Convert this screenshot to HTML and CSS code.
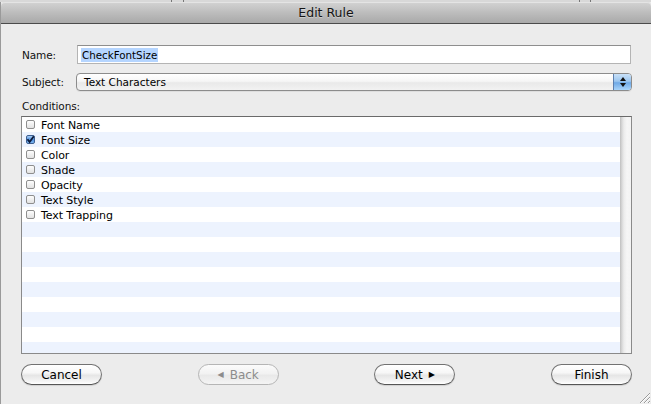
FILE: index.html
```html
<!DOCTYPE html>
<html>
<head>
<meta charset="utf-8">
<link rel="stylesheet" href="styles.css">
</head>
<body>
<div class="behind"><span class="behind-text">Resources_TestFolder</span></div>
<div class="sheet">
  <div class="titlebar">Edit Rule</div>
  <div class="content">
    <div class="field">
      <span class="lbl">Name:</span>
      <div class="input"><span class="sel">CheckFontSize</span></div>
    </div>
    <div class="field subject">
      <span class="lbl">Subject:</span>
      <div class="popup">
        <span class="popup-text">Text Characters</span>
        <span class="popup-arrows">
          <svg width="8" height="12" viewBox="0 0 8 12"><path d="M4 1 L7 5 L1 5 Z" fill="#111"/><path d="M1 7 L7 7 L4 11 Z" fill="#111"/></svg>
        </span>
      </div>
    </div>
    <div class="lbl cond">Conditions:</div>
    <div class="list">
      <div class="rows">
        <div class="row"><span class="cb"></span><span class="rt">Font Name</span></div>
        <div class="row"><span class="cb checked"><svg width="9" height="9" viewBox="0 0 9 9"><path d="M1.5 4.2 L3.6 7 L7.8 1.2" fill="none" stroke="#0b1a3a" stroke-width="1.8"/></svg></span><span class="rt">Font Size</span></div>
        <div class="row"><span class="cb"></span><span class="rt">Color</span></div>
        <div class="row"><span class="cb"></span><span class="rt">Shade</span></div>
        <div class="row"><span class="cb"></span><span class="rt">Opacity</span></div>
        <div class="row"><span class="cb"></span><span class="rt">Text Style</span></div>
        <div class="row"><span class="cb"></span><span class="rt">Text Trapping</span></div>
      </div>
      <div class="scroll"></div>
    </div>
    <div class="buttons">
      <div class="btn">Cancel</div>
      <div class="btn disabled"><span class="arr">&#9664;</span>Back</div>
      <div class="btn">Next<span class="arr right">&#9654;</span></div>
      <div class="btn">Finish</div>
    </div>
  </div>
  <div class="grip">
    <svg width="13" height="13" viewBox="0 0 13 13"><path d="M12 2 L2 12 M12 6 L6 12 M12 10 L10 12" stroke="#9a9a9a" stroke-width="1"/><path d="M12 3 L3 12 M12 7 L7 12 M12 11 L11 12" stroke="#ffffff" stroke-width="1"/></svg>
  </div>
</div>
</body>
</html>
```
FILE: styles.css
```css
html, body {
  margin: 0;
  padding: 0;
}
body {
  width: 651px;
  height: 404px;
  overflow: hidden;
  background: #ececec;
  font-family: "DejaVu Sans", "Noto Sans", sans-serif;
  color: #000;
}
.behind {
  height: 2px;
  overflow: hidden;
  background:
    linear-gradient(to right, transparent 171px, #777 171px, #777 172px, transparent 172px, transparent 183px, #777 183px, #777 184px, transparent 184px, transparent 579px, #777 579px, #777 580px, transparent 580px, transparent 590px, #777 590px, #777 591px, transparent 591px),
    #d8d8d8;
  display: flex;
}
.behind-text {
  display: block;
  margin-left: 203px;
  margin-top: -8px;
  font-size: 11px;
  line-height: 10px;
  color: #333;
  white-space: nowrap;
}
.sheet {
  position: relative;
  height: 402px;
  border-left: 1px solid #9a9a9a;
  background: #ececec;
}
.titlebar {
  height: 21px;
  line-height: 21px;
  text-align: center;
  font-size: 12.5px;
  color: #141414;
  text-shadow: 0 1px 0 rgba(255,255,255,0.35);
  background: linear-gradient(#d3d3d3, #bdbdbd 50%, #a9a9a9);
  border-bottom: 1px solid #4b4b4b;
  border-radius: 4px 4px 0 0;
  box-shadow: inset 0 1px 0 #e4e4e4;
}
.content {
  padding: 21px 19px 0 20px;
}
.field {
  display: flex;
  align-items: center;
  height: 19px;
}
.lbl {
  font-size: 10.5px;
  letter-spacing: -0.1px;
  color: #111;
}
.field .lbl {
  width: 55px;
  padding-left: 1px;
  box-sizing: border-box;
  flex: none;
}
.input {
  flex: 1;
  height: 19px;
  box-sizing: border-box;
  margin: 0 1px 0 1px;
  background: #fff;
  border: 1px solid #b4b4b4;
  border-top-color: #8e8e8e;
  display: flex;
  align-items: center;
  padding-left: 3px;
}
.sel {
  background: #b5d5ff;
  font-size: 10.3px;
  line-height: 14px;
  padding: 0 1px;
}
.subject {
  margin-top: 9px;
  height: 18px;
}
.popup {
  flex: 1;
  height: 18px;
  box-sizing: border-box;
  border: 1px solid #8c8c8c;
  border-radius: 4px;
  background: linear-gradient(#ffffff, #f6f6f6 45%, #e9e9e9 55%, #f2f2f2);
  display: flex;
  align-items: center;
  overflow: hidden;
  box-shadow: 0 1px 0 rgba(0,0,0,0.06);
}
.popup-text {
  flex: 1;
  font-size: 10.5px;
  padding-left: 7px;
}
.popup-arrows {
  width: 17px;
  height: 100%;
  border-left: 1px solid #5d7fae;
  background: linear-gradient(#c9e1f8, #9cc6ef 45%, #6fa9e6 55%, #a9d4fa);
  display: flex;
  align-items: center;
  justify-content: center;
}
.cond {
  display: block;
  margin-top: 9px;
  line-height: 13px;
  padding-left: 1px;
}
.list {
  margin-top: 3px;
  height: 238px;
  box-sizing: border-box;
  border: 1px solid #8a8a8a;
  border-top-color: #6a6a6a;
  display: flex;
  background: #fff;
}
.rows {
  flex: 1;
  background: repeating-linear-gradient(#ffffff 0, #ffffff 15px, #edf3fe 15px, #edf3fe 30px);
}
.row {
  height: 15px;
  display: flex;
  align-items: center;
  font-size: 11px;
  letter-spacing: -0.1px;
  padding-left: 4px;
}
.rt {
  padding-top: 1px;
}
.cb {
  width: 9px;
  height: 9px;
  box-sizing: border-box;
  border: 1px solid #8e8e8e;
  border-radius: 2px;
  background: linear-gradient(#fdfdfd, #e2e2e2);
  margin-right: 6px;
  flex: none;
  position: relative;
}
.cb.checked {
  border-color: #3d5f91;
  background: linear-gradient(#a8cdf5, #4e90e0 55%, #80b8f2);
}
.cb svg {
  position: absolute;
  left: -1px;
  top: -1px;
}
.scroll {
  width: 11px;
  background: linear-gradient(to right, #bfbfbf, #d9d9d9 2px, #ececec 4px, #f6f6f6 7px, #f3f3f3);
}
.buttons {
  margin-top: 10px;
  display: flex;
  justify-content: space-between;
}
.btn {
  width: 81px;
  height: 21px;
  box-sizing: border-box;
  border: 1px solid #727272;
  border-bottom-color: #555;
  border-radius: 11px;
  background: linear-gradient(#ffffff, #f7f7f7 40%, #e6e6e6 55%, #f4f4f4 85%, #ffffff);
  font-size: 12px;
  display: flex;
  align-items: center;
  justify-content: center;
  color: #000;
  box-shadow: 0 1px 1px rgba(0,0,0,0.12);
}
.btn.disabled {
  border-color: #b5b5b5;
  color: #8c8c8c;
  background: linear-gradient(#fbfbfb, #f2f2f2 45%, #e9e9e9 55%, #f4f4f4);
  box-shadow: none;
}
.arr {
  font-size: 8px;
  margin-right: 6px;
}
.arr.right {
  margin-right: 0;
  margin-left: 6px;
}
.grip {
  position: absolute;
  right: 0;
  bottom: 0;
  width: 13px;
  height: 13px;
}
.grip svg {
  display: block;
}
```
